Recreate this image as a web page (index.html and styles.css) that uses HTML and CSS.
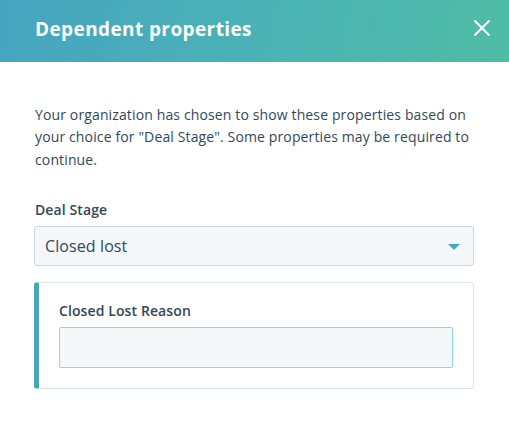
FILE: index.html
```html
<!DOCTYPE html>
<html lang="en">
<head>
<meta charset="utf-8">
<title>Dependent properties</title>
<link rel="stylesheet" href="styles.css">
</head>
<body>
<div class="modal">
  <header class="modal-header">
    <h1 class="modal-title">Dependent properties</h1>
    <button class="close-btn" aria-label="Close">
      <svg width="16" height="16" viewBox="0 0 16 16" aria-hidden="true">
        <path d="M1 1 L15 15 M15 1 L1 15" stroke="#fff" stroke-width="2" stroke-linecap="square" fill="none"/>
      </svg>
    </button>
  </header>
  <div class="modal-body">
    <p class="intro">Your organization has chosen to show these properties based on your choice for "Deal Stage". Some properties may be required to continue.</p>
    <div class="field">
      <label class="field-label">Deal Stage</label>
      <div class="select">
        <span class="select-value">Closed lost</span>
        <svg class="caret" width="12" height="6" viewBox="0 0 12 6" aria-hidden="true">
          <path d="M0 0 H12 L6 6 Z" fill="#4aa8c0"/>
        </svg>
      </div>
    </div>
    <div class="dep-card">
      <label class="field-label">Closed Lost Reason</label>
      <div class="text-input"></div>
    </div>
  </div>
</div>
</body>
</html>
```
FILE: styles.css
```css
* { box-sizing: border-box; }
html, body { margin: 0; padding: 0; background: #fff; }
body {
  font-family: "Open Sans", "Liberation Sans", sans-serif;
  color: #33475b;
  width: 509px;
  height: 428px;
  overflow: hidden;
}
.modal-header {
  height: 62px;
  display: flex;
  align-items: center;
  justify-content: space-between;
  padding: 0 19px 4px 35px;
  background: linear-gradient(100deg, #46a5c0 0%, #4ab2b6 50%, #4fbca5 100%);
}
.modal-title {
  margin: 0;
  font-size: 19px;
  font-weight: 700;
  letter-spacing: 0.4px;
  color: #fff;
  line-height: 24px;
}
.close-btn {
  border: 0;
  background: transparent;
  padding: 0;
  width: 16px;
  height: 16px;
  display: flex;
  margin-top: -2px;
}
.modal-body {
  padding: 42px 35px 0 34px;
}
.intro {
  margin: 0 0 28px 1px;
  font-size: 14px;
  line-height: 22.4px;
  letter-spacing: 0.13px;
}
.field-label {
  display: block;
  font-size: 14px;
  font-weight: 600;
  line-height: 22px;
  margin-left: 1px;
  letter-spacing: 0.1px;
}
.field { display: flex; flex-direction: column; gap: 5px; }
.select {
  height: 40px;
  background: #f5f8fa;
  border: 1px solid #cbd6e2;
  border-radius: 3px;
  display: flex;
  align-items: center;
  justify-content: space-between;
  padding: 0 13px 0 10px;
}
.select-value { font-size: 16px; line-height: 22px; letter-spacing: 0.1px; }
.caret { margin-top: 1px; }
.dep-card {
  margin-top: 16px;
  border: 1px solid #dfe3eb;
  border-left: 5px solid #47a7bf;
  border-radius: 3px;
  padding: 17px 20px 20px 20px;
  display: flex;
  flex-direction: column;
  gap: 5px;
}
.dep-card .field-label { margin-left: 0; }
.text-input {
  height: 41px;
  background: #f5f8fa;
  border: 1px solid #86dbe6;
  border-radius: 2px;
}
```
